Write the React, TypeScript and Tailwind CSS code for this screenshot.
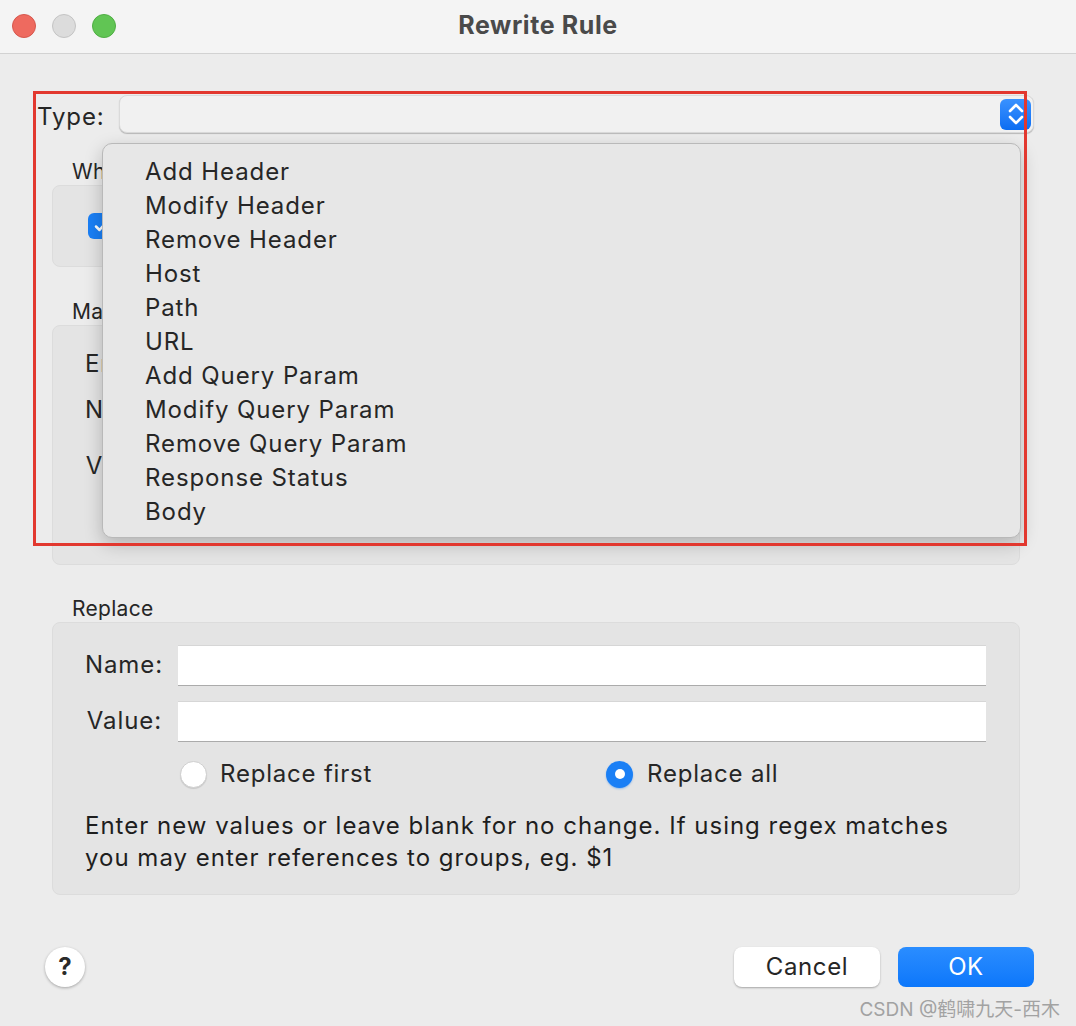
import React from "react";

const items = [
  "Add Header",
  "Modify Header",
  "Remove Header",
  "Host",
  "Path",
  "URL",
  "Add Query Param",
  "Modify Query Param",
  "Remove Query Param",
  "Response Status",
  "Body",
];

function Input() {
  return (
    <div className="flex-1 h-[40px] bg-white border-t border-[#d6d6d6] shadow-[0_1px_0_rgba(0,0,0,0.25)]" />
  );
}

export default function App() {
  return (
    <div className="relative w-[1076px] h-[1026px] overflow-hidden bg-[#ececec] font-['Inter','Noto_Sans_CJK_SC',sans-serif] text-[#262626]">
      {/* Title bar */}
      <div className="h-[54px] border-b border-[#d2d2d2] bg-[#f4f4f4] grid grid-cols-[1fr_auto_1fr] items-center">
        <div className="flex items-center gap-[16px] pl-[12px] pb-[2px]">
          <span className="w-[24px] h-[24px] rounded-full bg-[#ee6a5f] border border-[#d6574d]" />
          <span className="w-[24px] h-[24px] rounded-full bg-[#dcdcdc] border border-[#c4c4c4]" />
          <span className="w-[24px] h-[24px] rounded-full bg-[#61c554] border border-[#4fae43]" />
        </div>
        <div className="text-[25px] font-bold tracking-[0.6px] text-[#4a4a4a] leading-none pb-[3px]">Rewrite Rule</div>
        <div />
      </div>

      {/* Type row */}
      <div className="ml-[37px] mr-[42px] mt-[41px] flex items-center h-[38px]">
        <div className="w-[82px] text-[24px] tracking-[0.9px] leading-none pt-[5px]">Type:</div>
        <div className="flex-1 h-[38px] rounded-[8px] bg-[#f1f1f1] border border-[#dadada] shadow-[0_1px_1px_rgba(0,0,0,0.22)] flex items-center justify-end pr-[2px]">
          <div className="w-[31px] h-[31px] rounded-[6px] bg-linear-to-b from-[#3992ff] to-[#0a6df2] flex items-center justify-center">
            <svg width="20" height="26" viewBox="0 0 20 26" fill="none" stroke="white" strokeWidth="2.6" strokeLinecap="round" strokeLinejoin="round">
              <path d="M4 10 L10 4 L16 10" />
              <path d="M4 16 L10 22 L16 16" />
            </svg>
          </div>
        </div>
      </div>

      {/* Where */}
      <div className="ml-[72px] mt-[26px] h-[26px] leading-[26px] text-[21px] tracking-[0.3px]">Where</div>
      <div className="ml-[52px] mr-[56px] h-[82px] rounded-[8px] bg-[#e4e4e4] border border-[#dcdcdc] flex items-center pl-[35px] gap-[12px]">
        <div className="w-[26px] h-[26px] rounded-[6px] bg-[#1a7ff5] flex items-center justify-center">
          <svg width="16" height="16" viewBox="0 0 16 16" fill="none" stroke="white" strokeWidth="2.5" strokeLinecap="round" strokeLinejoin="round">
            <path d="M3 8.5 L6.5 12 L13 4.5" />
          </svg>
        </div>
        <span className="text-[24px] tracking-[0.9px]">Request</span>
      </div>

      {/* Match */}
      <div className="ml-[72px] mt-[32px] h-[26px] leading-[26px] text-[21px] tracking-[0.3px]">Match</div>
      <div className="ml-[52px] mr-[56px] h-[240px] rounded-[8px] bg-[#e4e4e4] border border-[#dcdcdc] pl-[32px] pr-[33px] pt-[22px] flex flex-col">
        <div className="text-[24px] tracking-[0.9px] h-[32px] leading-[32px]">Enter a header name and value to match</div>
        <div className="mt-[10px] flex items-center gap-[16px]">
          <div className="w-[76px] text-right text-[24px] tracking-[0.9px]">Name:</div>
          <Input />
        </div>
        <div className="mt-[16px] flex items-center gap-[16px]">
          <div className="w-[76px] text-right text-[24px] tracking-[0.9px]">Value:</div>
          <Input />
        </div>
      </div>

      {/* Replace */}
      <div className="ml-[72px] mt-[31px] h-[26px] leading-[26px] text-[21px] tracking-[0.3px]">Replace</div>
      <div className="ml-[52px] mr-[56px] h-[273px] rounded-[8px] bg-[#e4e4e4] border border-[#dcdcdc] pl-[32px] pr-[33px] pt-[22px] flex flex-col">
        <div className="flex items-center gap-[16px]">
          <div className="w-[77px] text-right text-[24px] tracking-[0.9px] leading-none">Name:</div>
          <Input />
        </div>
        <div className="mt-[16px] flex items-center gap-[16px]">
          <div className="w-[77px] text-right text-[24px] tracking-[0.9px] leading-none">Value:</div>
          <Input />
        </div>
        <div className="mt-[20px] h-[26px] flex items-center pl-[95px]">
          <div className="w-[426px] flex items-center gap-[13px]">
            <span className="w-[27px] h-[27px] rounded-full bg-white border border-[#cfcfcf] shadow-[0_1px_1px_rgba(0,0,0,0.12)]" />
            <span className="text-[24px] tracking-[0.8px] leading-none">Replace first</span>
          </div>
          <div className="flex items-center gap-[14px]">
            <span className="w-[27px] h-[27px] rounded-full bg-[#1a7ff5] flex items-center justify-center shadow-[0_1px_2px_rgba(26,127,245,0.4)]">
              <span className="w-[10px] h-[10px] rounded-full bg-white" />
            </span>
            <span className="text-[24px] tracking-[0.8px] leading-none">Replace all</span>
          </div>
        </div>
        <div className="mt-[23px] text-[24px] tracking-[1px] leading-[32px] text-[#1e1e1e]">
          Enter new values or leave blank for no change. If using regex matches
          <br />
          you may enter references to groups, eg. $1
        </div>
      </div>

      {/* Bottom */}
      <div className="mt-[52px] ml-[45px] mr-[42px] flex items-center">
        <div className="w-[40px] h-[40px] rounded-full bg-white shadow-[0_1px_3px_rgba(0,0,0,0.3)] flex items-center justify-center text-[24px] font-bold text-[#2a2a2a] leading-none">
          ?
        </div>
        <div className="flex-1" />
        <div className="w-[146px] h-[40px] rounded-[8px] bg-white shadow-[0_1px_2px_rgba(0,0,0,0.3)] flex items-center justify-center text-[24px] tracking-[0.6px] leading-none">
          Cancel
        </div>
        <div className="ml-[18px] w-[136px] h-[40px] rounded-[8px] bg-linear-to-b from-[#2a8dff] to-[#0b77fb] flex items-center justify-center text-[24px] tracking-[0.6px] text-white leading-none">
          OK
        </div>
      </div>

      {/* Watermark */}
      <div className="absolute right-[16px] bottom-[7px] text-[19px] text-[#a2a2a2] leading-none">
        CSDN @鹤啸九天-西木
      </div>

      {/* Dropdown menu */}
      <div className="absolute left-[102px] top-[143px] w-[919px] h-[395px] rounded-[10px] bg-[#e7e7e7] border border-[#b9b9b9] shadow-[0_6px_18px_rgba(0,0,0,0.22)] pt-[11px] pl-[42px]">
        {items.map((it) => (
          <div key={it} className="h-[34px] leading-[34px] text-[24px] tracking-[0.9px] text-[#262626]">
            {it}
          </div>
        ))}
      </div>

      {/* Red annotation box */}
      <div className="absolute left-[33px] top-[91px] w-[994px] h-[455px] border-[3px] border-[#e2382f]" />
    </div>
  );
}
